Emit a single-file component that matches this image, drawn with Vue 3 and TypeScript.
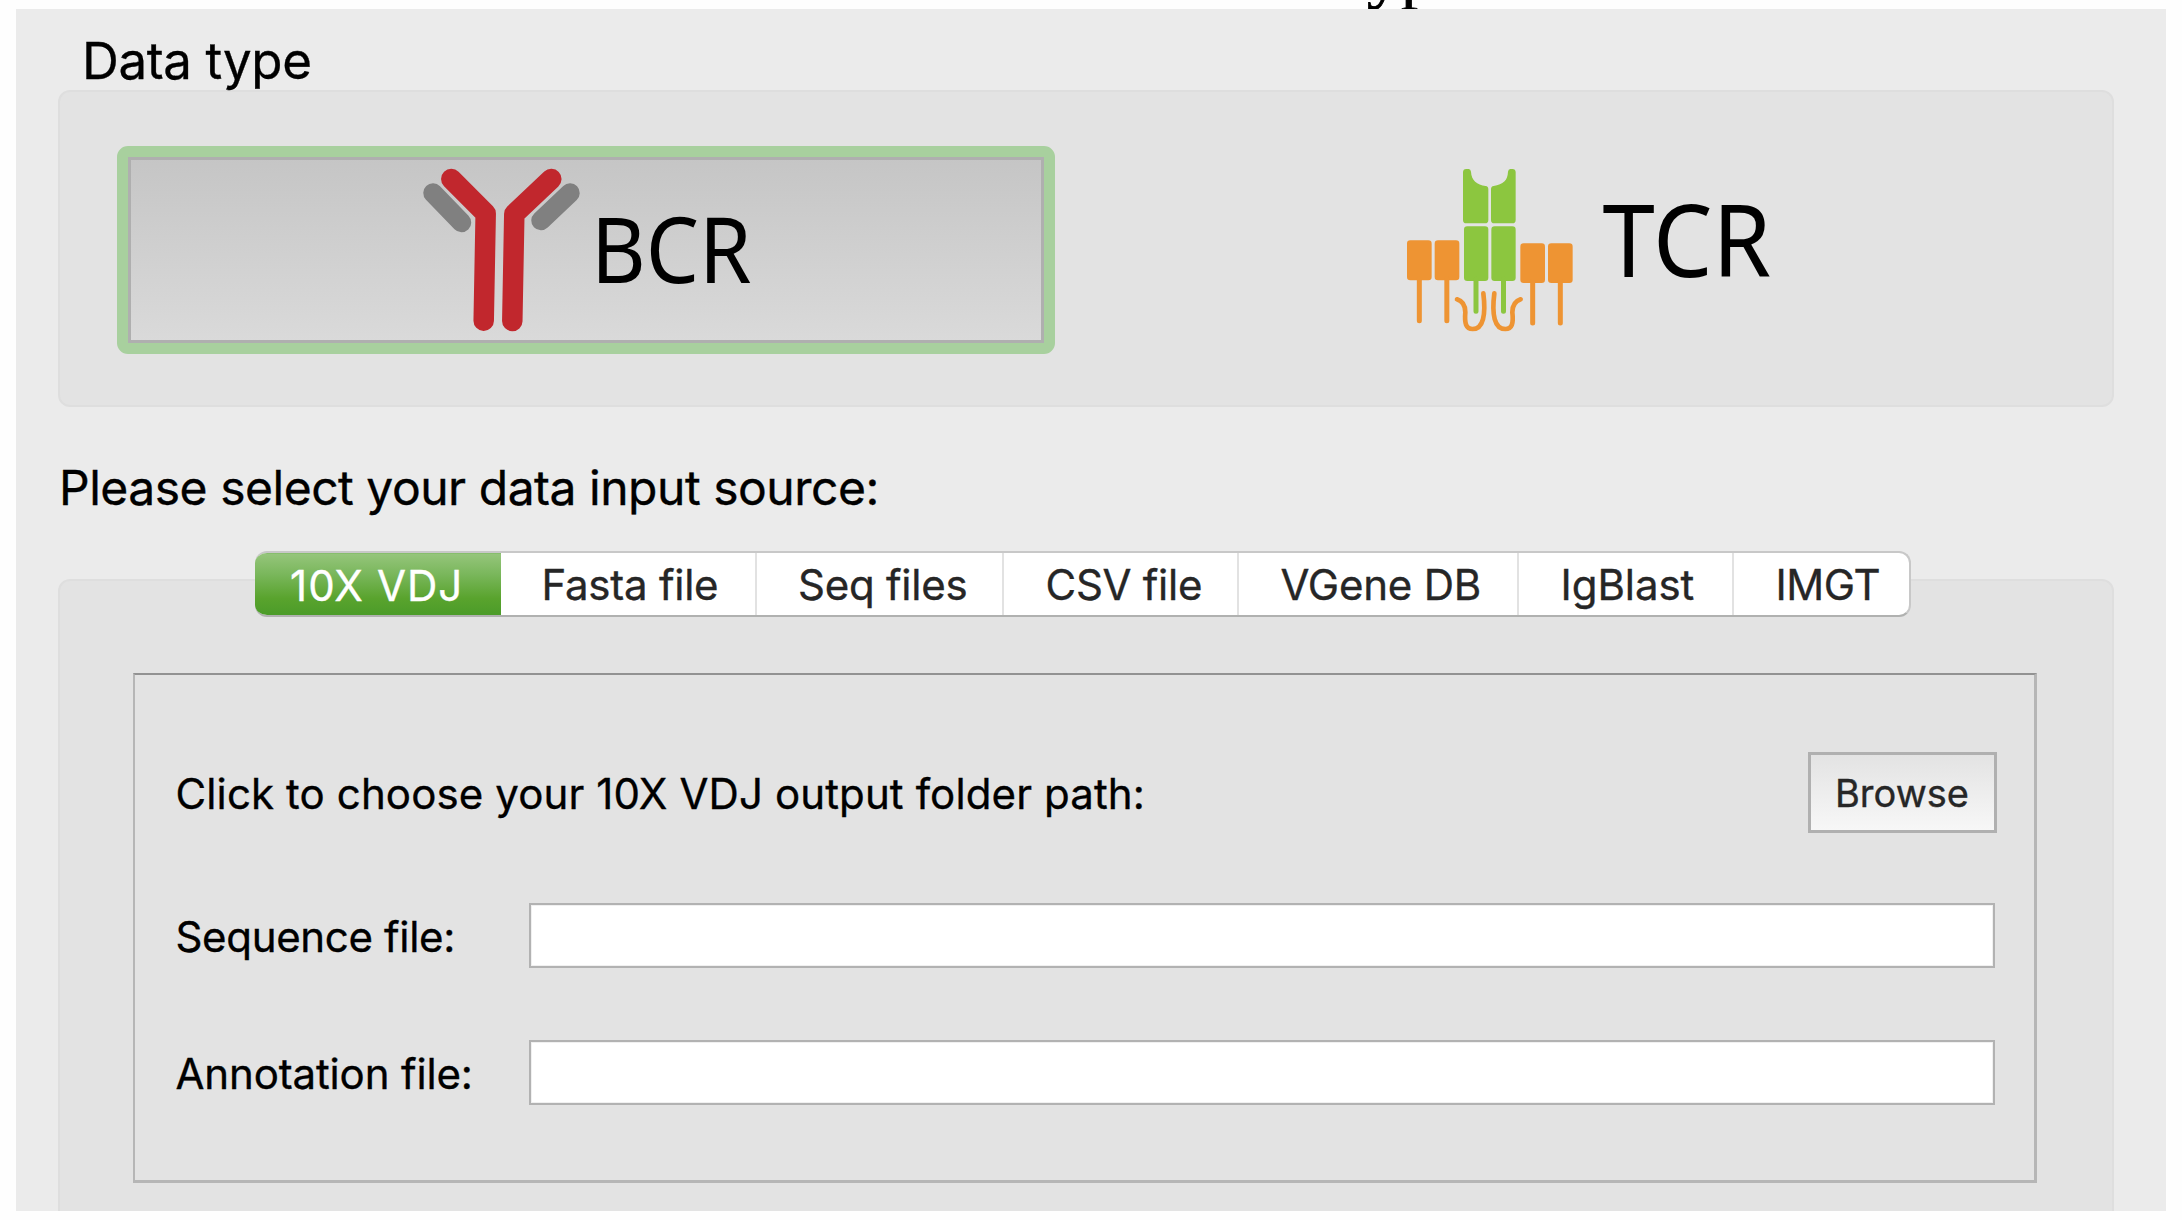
<script setup lang="ts">
import { ref } from 'vue'

interface Tab {
  label: string
  width: number
  indent: number
  spacing: number
}

const tabs: Tab[] = [
  { label: '10X VDJ', width: 246, indent: 35, spacing: 1.08 },
  { label: 'Fasta file', width: 255.5, indent: 40.5, spacing: -0.24 },
  { label: 'Seq files', width: 247.5, indent: 41.5, spacing: -0.24 },
  { label: 'CSV file', width: 234.5, indent: 41.5, spacing: -0.27 },
  { label: 'VGene DB', width: 280, indent: 42, spacing: -0.22 },
  { label: 'IgBlast', width: 215, indent: 42, spacing: -0.07 },
  { label: 'IMGT', width: 177.5, indent: 42, spacing: -0.43 },
]
const active = ref(0)
const sequenceFile = ref('')
const annotationFile = ref('')
</script>

<template>
  <div class="page">
    <div class="caption"><span>yp</span></div>
    <main class="window">
      <h2 class="group-title">Data type</h2>
      <section class="group types">
        <button class="type selected">
          <svg width="340" height="177" viewBox="420 160 340 177">
            <g fill="none" stroke-linecap="round" stroke-linejoin="round">
              <g stroke="#808080" stroke-width="19.5">
                <path d="M433 193L461.5 222.5" />
                <path d="M570 193L541 220.5" />
              </g>
              <g stroke="#c1272d" stroke-width="20.5">
                <path d="M451.3 179L485.7 213.5L483.7 320.7" />
                <path d="M551.3 179L514.3 214L512.3 321" />
              </g>
            </g>
            <text x="591" y="282.8" font-size="91" textLength="160.5" lengthAdjust="spacingAndGlyphs">BCR</text>
          </svg>
        </button>
        <button class="type">
          <svg width="380" height="177" viewBox="1400 160 380 177">
            <g transform="translate(1380 140) scale(0.33333)">
              <g fill="#8cc63f">
                <path d="M249 97q0-10 10-10h7q6 0 7 8c1 26 18 39 44 43q8 1 8 10v92q0 10-10 10h-56q-10 0-10-10z" />
                <path d="M407 97q0-10-10-10h-6q-6 0-7 8c-1 26-14 38-43 43q-8 1-8 10v92q0 10 10 10h54q10 0 10-10z" />
                <rect x="252" y="259" width="73" height="164" rx="10" />
                <rect x="334" y="259" width="73" height="164" rx="10" />
              </g>
              <g fill="#ee9433">
                <rect x="81" y="301" width="74" height="120" rx="10" />
                <rect x="164" y="301" width="74" height="120" rx="10" />
                <rect x="421" y="310" width="74" height="119" rx="10" />
                <rect x="504" y="310" width="74" height="119" rx="10" />
              </g>
              <g fill="none" stroke-width="15" stroke-linecap="round">
                <path stroke="#8cc63f" d="M288 418V514M370.5 418V514" />
                <path stroke="#ee9433" d="M118 416V542M200.5 416V542M458 424V549M541 424V549" />
                <path stroke="#ee9433" stroke-width="14" d="M231 478C250 484 256 499 256 517C253 550 258 567 278 567C310 567 318 523 310 460M422 478C404 484 397 499 397 517C401 550 396 567 376 567C343 567 335 523 343 460" />
              </g>
            </g>
            <text x="1602.5" y="277.2" font-size="100" textLength="168.5" lengthAdjust="spacingAndGlyphs">TCR</text>
          </svg>
        </button>
      </section>

      <p class="prompt">Please select your data input source:</p>

      <section class="source">
        <nav class="tabs">
          <button
            v-for="(tab, i) in tabs"
            :key="tab.label"
            class="tab"
            :class="{ active: i === active }"
            :style="{ width: tab.width + 'px', paddingLeft: tab.indent + 'px', letterSpacing: tab.spacing + 'px' }"
            @click="active = i"
          >{{ tab.label }}</button>
        </nav>
        <div class="group panel">
          <div class="frame">
            <div class="row first">
              <span class="hint">Click to choose your 10X VDJ output folder path:</span>
              <button class="browse">Browse</button>
            </div>
            <label class="row field">
              <span class="seq">Sequence file:</span>
              <input v-model="sequenceFile" type="text" />
            </label>
            <label class="row field second">
              <span class="ann">Annotation file:</span>
              <input v-model="annotationFile" type="text" />
            </label>
          </div>
        </div>
      </section>
    </main>
  </div>
</template>

<style>
body { background: #fff; overflow: hidden; }
</style>

<style scoped>
.page {
  box-sizing: border-box;
  width: 2182px;
  height: 1220px;
  overflow: hidden;
  background: #fefefe;
  font-family: Inter, "Liberation Sans", sans-serif;
  color: #000;
  -webkit-text-stroke: 0.35px;
}
.page * { box-sizing: border-box; }
button {
  margin: 0;
  padding: 0;
  border: 0;
  border-radius: 0;
  background: none;
  font-family: inherit;
  text-align: left;
  white-space: nowrap;
}
.caption {
  height: 9px;
  padding-left: 1367px;
  overflow: hidden;
  font: 68px/9px "Liberation Serif", serif;
  -webkit-text-stroke: 0.8px;
}
.caption span { display: block; margin-top: -31px; }
.window {
  width: 2150px;
  height: 1202px;
  margin-left: 16px;
  padding: 0 52px 0 42px;
  overflow: hidden;
  background: #ebebeb;
}
.group-title {
  height: 81px;
  margin: 0;
  padding: 22px 0 0 24px;
  font-size: 51px;
  line-height: 60px;
  font-weight: 400;
  letter-spacing: -0.35px;
}
.group {
  border: 2px solid #dedede;
  border-radius: 12px;
  background: #e3e3e3;
}
.types {
  display: flex;
  height: 317px;
  padding: 54px 0 0 57px;
}
.type { display: flex; height: 208px; padding: 14px 0 0 345px; }
.type svg { display: block; flex: none; overflow: visible; }
.type text { font-family: "Noto Sans", sans-serif; fill: #000; -webkit-text-stroke: 0; }
.type.selected {
  width: 938px;
  padding: 3px 0 0 292px;
  border: 11px solid #a8d09e;
  border-radius: 11px;
  background: linear-gradient(#c5c5c5, #dadada);
  box-shadow: inset 0 0 0 3px #afafaf;
}
.prompt {
  height: 144px;
  margin: 0;
  padding: 51px 0 0 1px;
  font-size: 48px;
  line-height: 60px;
  letter-spacing: -0.48px;
}
.tabs {
  position: relative;
  display: flex;
  width: 1656px;
  height: 66px;
  margin-left: 197px;
  overflow: hidden;
  border: 2px solid #c8c8c8;
  border-bottom-color: #b0b1b0;
  border-left: 0;
  border-radius: 12px;
  background: #fff;
}
.tab {
  flex: none;
  height: 62px;
  padding-top: 1px;
  border-right: 2px solid #e2e2e2;
  font-size: 42px;
  line-height: 61px;
  color: #262626;
}
.tab:last-child { border-right: 0; }
.tab.active {
  height: 66px;
  margin-top: -2px;
  padding-top: 3px;
  border-right: 0;
  background: linear-gradient(#78b65e 0 2px, #95c57b 3px, #7ab75c 35%, #59a32d 72%, #4a9b29);
  color: #fff;
}
.panel {
  height: 660px;
  margin-top: -38px;
  padding: 92px 75px 0 73px;
}
.frame {
  height: 510px;
  padding: 77px 37px 0 40.5px;
  border: solid #b6b6b6;
  border-width: 2px 3px 3px 2px;
  border-top-color: #929292;
}
.row { display: flex; justify-content: space-between; font-size: 42px; }
.first { height: 151px; }
.hint { padding-top: 12px; line-height: 60px; letter-spacing: 0.12px; }
.browse {
  width: 189px;
  height: 81px;
  padding-left: 24px;
  border: 3px solid #b0b0b0;
  background: linear-gradient(#e3e3e3, #f7f7f7);
  font-size: 38px;
  line-height: 76px;
  color: #262626;
}
.field { height: 65px; padding-right: 2px; }
.second { margin-top: 72px; }
.field span { line-height: 68px; }
.seq { letter-spacing: -0.33px; }
.ann { letter-spacing: -0.14px; }
input {
  width: 1466px;
  height: 65px;
  margin: 0;
  padding: 0 10px;
  border: 2px solid #b2b2b2;
  border-radius: 0;
  outline: 0;
  background: #fff;
  box-shadow: inset 0 0 0 1px #f0f0f0;
  font: 42px Inter, sans-serif;
}
</style>
